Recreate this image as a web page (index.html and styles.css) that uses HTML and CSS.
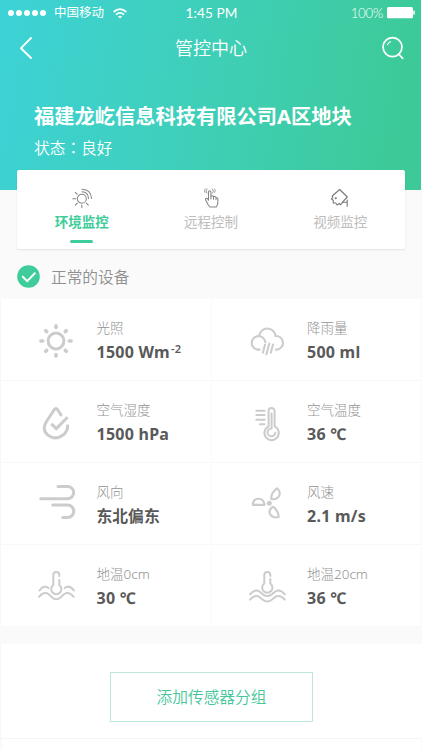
FILE: index.html
```html
<!DOCTYPE html>
<html lang="zh-CN">
<head>
<meta charset="utf-8">
<title>管控中心</title>
<link rel="stylesheet" href="styles.css">
</head>
<body>
<header class="hero">
  <div class="status">
    <div class="carrier">
      <span class="dots"><i></i><i></i><i></i><i></i><i></i></span>
      <span class="operator">中国移动</span>
      <svg class="wifi" width="14" height="11" viewBox="0 0 14 11" fill="none" stroke="#fff" stroke-width="1.7"><path d="M.6 4Q7-1.6 13.4 4M3 6.6Q7 3.2 11 6.6"/><path d="M4.9 8.5Q7 6.9 9.1 8.5L7 10.6Z" fill="#fff" stroke="none"/></svg>
    </div>
    <time class="clock">1:45 PM</time>
    <div class="power"><span class="percent">100%</span><svg width="28" height="12" viewBox="0 0 28 12" fill="#fff"><rect width="26" height="11.3" rx="1.5"/><rect x="26.3" y="3.6" width="1.4" height="4.4" rx=".7"/></svg></div>
  </div>
  <nav class="nav">
    <svg width="14" height="24" viewBox="0 0 14 24" fill="none" stroke="#fff" stroke-width="1.9" stroke-linecap="round" stroke-linejoin="round"><path d="M12 2 2 12.2 12 22"/></svg>
    <h1 class="nav-title">管控中心</h1>
    <svg width="22" height="24" viewBox="0 0 22 24" fill="none" stroke="#fff" stroke-width="1.7" stroke-linecap="round"><circle cx="10.5" cy="11.1" r="9.5"/><path d="m16.5 18 4.2 4.4"/><path d="M5.5 8.8Q6.4 6.7 8.5 5.8" stroke-width="1.1"/></svg>
  </nav>
  <h2 class="site">福建龙屹信息科技有限公司A区地块</h2>
  <p class="state">状态<span class="colon" lang="zh-TW">：</span>良好</p>
</header>

<main>
  <div class="tabs">
    <div class="tab active">
      <svg width="22" height="22" viewBox="0 0 22 22" fill="none" stroke="#858585" stroke-width="1.05" stroke-linecap="round"><circle cx="10.8" cy="11.7" r="4.5"/><path d="M1.8 11.7h2.8M4.3 5.3l2 2M4.3 18.2l2-2M10.8 18v2.5M15.3 16.2l2 2M11 4.8Q17.3 5 17.5 11.5M11.1 2.2Q20 2.5 20.5 11.4"/></svg>
      <span class="tab-name">环境监控</span><b class="marker"></b>
    </div>
    <div class="tab">
      <svg width="22" height="22" viewBox="0 0 22 22" fill="none" stroke="#858585" stroke-width="1.05" stroke-linecap="round" stroke-linejoin="round"><path d="M8.5 13.2V5.2Q8.5 3.7 9.7 3.7T10.9 5.2V10Q11.1 8.7 12.3 8.8 13.5 9 13.5 10.2 13.8 9.2 14.9 9.4 16 9.7 16 10.9 17.9 10.2 17.9 12.5V15Q17.7 18 16.2 20H9.8Q8.1 18.3 7 15.5L5.7 13Q5.1 11.5 6.5 11.3 7.5 11.3 8.5 13.2M10.9 10v2M13.5 10.2v2M16 11v1.4"/><path d="M6.8 6.2Q4.8 3.9 7 1.8M12.6 6.2Q14.6 3.9 12.4 1.8M4.9 5.4Q3.8 3.6 4.9 2M14.8 5.4Q15.9 3.6 14.8 2" stroke-width=".8"/></svg>
      <span class="tab-name">远程控制</span>
    </div>
    <div class="tab">
      <svg width="22" height="22" viewBox="0 0 22 22" fill="none" stroke="#777" stroke-width="1.1" stroke-linecap="round" stroke-linejoin="round"><path d="M10.7 2.5 18.3 10 14 14.6 11.7 17.8 10.3 16.4 8.2 18 6.8 16 4.2 16 4.2 13.2 2.3 11.8 4 10.4 3.2 9Z"/><path d="M13.3 15.3h4.8M18.2 13v6.3"/><circle cx="6.8" cy="11.2" r=".5"/></svg>
      <span class="tab-name">视频监控</span>
    </div>
  </div>

  <div class="section">
    <svg width="23" height="23" viewBox="0 0 23 23"><circle cx="11.5" cy="11.5" r="11.3" fill="#3ecc9a"/><path d="m5.8 11.8 4.4 4.3 7.6-7.8" fill="none" stroke="#fff" stroke-width="2" stroke-linecap="round"/></svg>
    <h3 class="section-title">正常的设备</h3>
  </div>

  <div class="grid">
    <div class="cell">
      <svg class="icon" viewBox="0 0 40 40"><circle cx="20" cy="20" r="7.9" stroke-width="3"/><path stroke-width="3.6" d="M20 4.9v1.5M20 33.6v1.5M4.9 20h1.8M33.3 20h1.8M9.7 9.7l1 1M29.3 29.3l1 1M30.3 9.7l-1 1M10.7 29.3l-1 1"/></svg>
      <div class="reading"><span class="label">光照</span><strong class="value">1500 Wm<sup>-2</sup></strong></div>
    </div>
    <div class="cell">
      <svg class="icon" viewBox="0 0 40 40" stroke-width="2.1"><path d="M12.6 28.6H10.5A6.8 6.8 0 1 1 18.3 21M12.2 14.6A8.2 8.2 0 0 1 28.5 15 6.8 6.8 0 0 1 29.8 28.6H28.8M18.1 23.5l-2.2 8.2M22.3 22.5l-2.9 10.7M26 23.5l-2.2 8.2"/></svg>
      <div class="reading"><span class="label">降雨量</span><strong class="value">500 ml</strong></div>
    </div>
    <div class="cell">
      <svg class="icon" viewBox="0 0 40 40" stroke-width="3"><path stroke-linejoin="round" d="M25 12 21.5 6.5Q20 4.3 18.4 6.5L10.8 18Q5.4 26 11.3 31.6 19 38.1 27.5 31.8 31.9 27.8 31.6 22.7"/><path d="m15.3 20.8 5 4.8 11.3-11.4" stroke-linecap="butt"/></svg>
      <div class="reading"><span class="label">空气湿度</span><strong class="value">1500 hPa</strong></div>
    </div>
    <div class="cell">
      <svg class="icon" viewBox="0 0 40 40" stroke-width="2"><path d="M9.3 7.8h8.3M9.3 12.1h8.3M9.3 16.8h8.3M13 21.3h4.6M21.6 23.4V8.1a3 3 0 0 1 6 0v15.3a7.2 7.2 0 1 1-6 0M24.6 10.5v15M28.3 29.8a3.9 3.9 0 1 1-3.7-4.3"/></svg>
      <div class="reading"><span class="label">空气温度</span><strong class="value">36 ℃</strong></div>
    </div>
    <div class="cell">
      <svg class="icon raised" viewBox="0 0 40 40" stroke-width="3"><path d="M22 3.5h9.6a6.1 6.1 0 0 1 0 12.2H4.7M16.8 22.1h14.8a6.2 6.2 0 0 1 0 12.4h-4.8"/></svg>
      <div class="reading"><span class="label">风向</span><strong class="value wide">东北偏东</strong></div>
    </div>
    <div class="cell">
      <svg class="icon raised" viewBox="0 0 40 40"><circle cx="22.3" cy="20.2" r="2.5" fill="#ccc" stroke="none"/><g stroke-width="2.1" stroke-linejoin="round"><path d="M5.8 21.9H17.5Q16.8 15.8 11.5 15.8T5.8 21.9Z"/><path d="M24.2 16.1Q24 9.5 30 5.3 34 8.5 32.2 12.6T24.2 16.1Z"/><path d="M26 23.7Q20.8 27.4 23.2 31.4 26.2 35.6 31.7 34.1 31.5 27.6 26 23.7Z"/></g></svg>
      <div class="reading"><span class="label">风速</span><strong class="value">2.1 m/s</strong></div>
    </div>
    <div class="cell">
      <svg class="icon raised" viewBox="0 0 40 40" stroke-width="2"><path d="M17.3 20V10a3 3 0 0 1 6 0v1M23.3 15v5a5.1 5.1 0 1 1-6 0M3.5 25.4Q8.4 19.4 12.5 23M28.5 23Q33.2 19.4 37.8 25.4M3 31.8Q8.2 25.8 12.7 29.2L16.2 32.4Q20.3 36 24.4 32.4L28 29.2Q32.7 25.8 37.8 31.8"/></svg>
      <div class="reading"><span class="label">地温0cm</span><strong class="value">30 ℃</strong></div>
    </div>
    <div class="cell">
      <svg class="icon raised" viewBox="0 0 40 40" stroke-width="2"><path d="M17.3 18.5V10a3 3 0 0 1 6 0v1M23.3 14v4.5a5.1 5.1 0 1 1-6 0M3 29.3Q8.2 23.3 12.7 26.7L16.2 29.6Q20.3 32.3 24.4 29.6L28 26.7Q32.7 23.3 37.8 29.3M3 34.6Q8.2 29 12.7 32.2L16.2 35Q20.3 38.1 24.4 35L28 32.2Q32.7 29 37.8 34.6"/></svg>
      <div class="reading"><span class="label">地温20cm</span><strong class="value">36 ℃</strong></div>
    </div>
  </div>

  <div class="add-panel"><button class="add">添加传感器分组</button></div>
  <div class="next-panel"></div>
</main>
</body>
</html>
```
FILE: styles.css
```css
* { box-sizing: border-box; }
body {
  margin: 0;
  height: 750px;
  overflow: hidden;
  background: #fafafa;
  font-family: "Noto Sans", "Noto Sans CJK SC", sans-serif;
}
h1, h2, h3, p { margin: 0; font-weight: 400; }
svg { display: block; flex: none; }

.hero {
  height: 190px;
  width: 421px;
  color: #fff;
  background: linear-gradient(100deg, #3dd2d5 3%, #3fcfb8 48%, #3dca98 94%);
}
.status {
  display: grid;
  grid-template-columns: 1fr auto 1fr;
  align-items: center;
  height: 26px;
  padding: 0 6px 0 8px;
}
.carrier, .power { display: flex; align-items: center; }
.dots { display: flex; gap: 2px; }
.dots i { width: 6px; height: 6px; border-radius: 50%; background: #fff; }
.operator { margin: 0 9px 0 8px; font-size: 12.5px; line-height: 20px; white-space: nowrap; }
.clock { font: 13.6px/20px Lato, sans-serif; letter-spacing: .1px; }
.power { justify-content: flex-end; gap: 4px; }
.percent { font: 300 13.3px/20px Lato, sans-serif; letter-spacing: -.3px; }

.nav {
  display: flex;
  align-items: center;
  justify-content: space-between;
  height: 43px;
  padding: 0 17px 0 19px;
}
.nav-title { margin-left: 7px; font-size: 18px; line-height: 26px; font-weight: 350; }
.site { margin: 32px 0 0 34px; font-size: 20.25px; font-weight: 700; line-height: 30px; white-space: nowrap; }
.state { margin: 5px 0 0 34px; font-size: 15.7px; line-height: 24px; font-weight: 350; }
.colon { font-family: "Noto Sans CJK TC", sans-serif; }

.tabs {
  position: relative;
  display: grid;
  grid-template-columns: repeat(3, 1fr);
  width: 388px;
  height: 79px;
  margin: -20px 0 0 17px;
  background: #fff;
  border-radius: 2px;
  box-shadow: 0 1px 2px rgba(0, 0, 0, .1);
}
.tab { display: flex; flex-direction: column; align-items: center; padding-top: 17px; color: #bdbdbd; }
.tab-name { margin-top: 3px; font-size: 13.5px; line-height: 20px; }
.active .tab-name { color: #3ecc9a; font-weight: 700; }
.marker { width: 23px; height: 3px; margin-top: 8px; border-radius: 2px; background: #3ecc9a; }

.section { display: flex; align-items: center; gap: 11px; height: 50px; padding: 5px 0 0 17px; }
.section-title { color: #8f8f8f; font-size: 15.7px; line-height: 24px; font-weight: 350; }

.grid {
  display: grid;
  grid-template-columns: 210.5px 1fr;
  grid-template-rows: repeat(4, 82px);
  border-left: 1px solid #f8f8f8;
  background: #fff;
}
.cell { display: flex; align-items: center; padding: 1px 0 0 35px; border-bottom: 1px solid #f8f8f8; border-right: 1px solid #fafafa; }
.icon { width: 40px; height: 40px; fill: none; stroke: #ccc; stroke-linecap: round; margin-top: 1px; }
.icon.raised { margin-top: -2px; }
.reading { display: flex; flex-direction: column; margin-left: 20.5px; padding-top: 1px; }
.label { color: #929292; font-size: 13.5px; font-weight: 300; line-height: 20px; }
.value { margin-top: 3px; color: #595959; font-size: 16px; line-height: 22px; letter-spacing: .25px; white-space: nowrap; }
.value.wide { font-size: 15.8px; letter-spacing: 0; }
sup { margin-left: 1px; font-size: 11px; font-weight: 600; line-height: 0; vertical-align: 5px; }

.add-panel { display: flex; justify-content: center; height: 95px; margin-top: 17px; padding-top: 28px; border-left: 1px solid #f8f8f8; border-bottom: 1px solid #f5f5f5; background: #fff; }
.add { width: 203px; height: 50px; padding: 0 0 2px; border: 1px solid #bce8d8; background: #fff; color: #47c69b; font-family: inherit; font-size: 15.7px; font-weight: 350; }
.next-panel { height: 12px; margin: 0 1px 0 2px; background: #fff; }
```
